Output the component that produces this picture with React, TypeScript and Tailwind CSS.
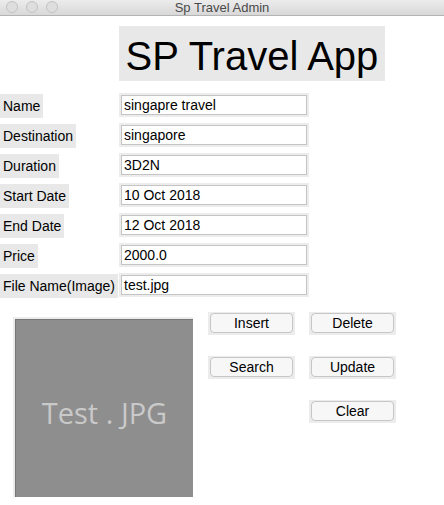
const fields = [
  { label: 'Name', value: 'singapre travel' },
  { label: 'Destination', value: 'singapore' },
  { label: 'Duration', value: '3D2N' },
  { label: 'Start Date', value: '10 Oct 2018' },
  { label: 'End Date', value: '12 Oct 2018' },
  { label: 'Price', value: '2000.0' },
  { label: 'File Name(Image)', value: 'test.jpg' },
]

function Btn({ text }: { text: string }) {
  return (
    <div className="w-[87px] h-[23px] bg-[#ececec] p-[2px] pt-[1px]">
      <div className="h-full rounded-[4px] border border-[#c6c6c6] bg-[#f7f7f7] flex items-center justify-center text-[14px] text-black leading-none">
        {text}
      </div>
    </div>
  )
}

export default function App() {
  return (
    <div className="w-[444px] h-[505px] bg-white overflow-hidden font-['Liberation_Sans',Arial,sans-serif]">
      {/* Title bar */}
      <div className="relative h-4 bg-gradient-to-b from-[#ececec] to-[#d8d8d8] border-b border-[#b4b4b4] flex items-center justify-center">
        <div className="absolute left-[6px] top-[1px] flex gap-[8px]">
          <span className="w-3 h-3 rounded-full bg-[#dedede] border border-[#c2c2c2]" />
          <span className="w-3 h-3 rounded-full bg-[#dedede] border border-[#c2c2c2]" />
          <span className="w-3 h-3 rounded-full bg-[#dedede] border border-[#c2c2c2]" />
        </div>
        <span className="text-[13px] text-[#4a4a4a] leading-none">Sp Travel Admin</span>
      </div>

      {/* Heading */}
      <div className="mt-[10px] ml-[119px] w-[266px] h-[55px] bg-[#e8e8e8] flex items-center justify-center pt-[5px]">
        <span className="text-[40px] leading-none text-black">SP Travel App</span>
      </div>

      {/* Form rows */}
      <div className="mt-[12px] flex flex-col gap-[6px]">
        {fields.map((f) => (
          <div key={f.label} className="flex h-6">
            <div className="w-[119px] flex">
              <span className="h-6 mt-[1px] bg-[#e8e8e8] px-[3px] flex items-center text-[14px] text-black">{f.label}</span>
            </div>
            <div className="w-[190px] h-6 bg-[#ececec] p-[2px]">
              <div className="h-full border border-[#c4c4c4] bg-white px-[2px] pt-[1px] flex items-center text-[14px] text-black">
                {f.value}
              </div>
            </div>
          </div>
        ))}
      </div>

      {/* Image + buttons */}
      <div className="flex">
        <div className="ml-[13px] mt-[20px] w-[180px] h-[180px] border-l-2 border-t-2 border-[#ececec]">
          <div className="h-full border-l border-t border-[#777777] bg-[#8e8e8e] flex items-center justify-center pt-[8px]">
            <span className="font-['Open_Sans',sans-serif] text-[29px] text-[#c9c9c9] leading-none">Test . JPG</span>
          </div>
        </div>
        <div className="ml-[15px] mt-[15px] grid grid-cols-[87px_87px] gap-x-[14px] gap-y-[21px] h-fit">
          <Btn text="Insert" />
          <Btn text="Delete" />
          <Btn text="Search" />
          <Btn text="Update" />
          <div />
          <Btn text="Clear" />
        </div>
      </div>
    </div>
  )
}
